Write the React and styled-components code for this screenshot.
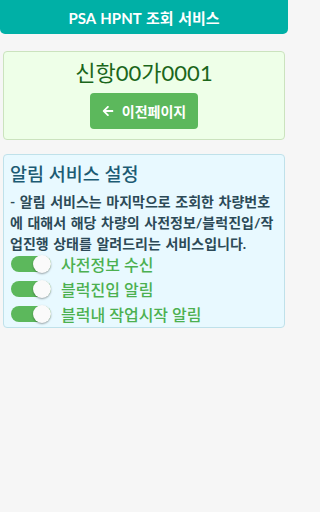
import React, { useState } from 'react';
import styled, { createGlobalStyle } from 'styled-components';
import { FaArrowLeft } from 'react-icons/fa';

const GlobalStyle = createGlobalStyle`
  html, body {
    margin: 0;
    padding: 0;
    background: #f6f6f6;
    font-family: Lato, "Noto Sans CJK KR", sans-serif;
  }
`;

const Page = styled.div`
  width: 288px;
  min-height: 512px;
`;

const Header = styled.header`
  height: 34px;
  background: #00b0a6;
  border-radius: 0 0 5px 5px;
  color: #fff;
  font-size: 15px;
  font-weight: 700;
  word-spacing: 1px;
  display: flex;
  align-items: center;
  justify-content: center;
`;

const Main = styled.main`
  padding: 17px 3px;
  display: flex;
  flex-direction: column;
  gap: 14px;
`;

const Card = styled.section`
  background: ${(p) => p.$bg};
  border: 1px solid ${(p) => p.$border};
  border-radius: 4px;
`;

const PlateCard = styled(Card)`
  padding: 6px 0 10px;
  display: flex;
  flex-direction: column;
  align-items: center;
`;

const Plate = styled.div`
  font-size: 22px;
  line-height: 30px;
  color: #1b661b;
`;

const BackButton = styled.button`
  margin-top: 5px;
  width: 108px;
  height: 36px;
  border: none;
  border-radius: 4px;
  background: #5cb85c;
  color: #fff;
  font-family: inherit;
  font-size: 14px;
  font-weight: 700;
  display: flex;
  align-items: center;
  justify-content: center;
  gap: 8px;
`;

const AlertCard = styled(Card)`
  padding: 6px 6px 0;
`;

const Title = styled.h2`
  margin: 0;
  font-size: 18.5px;
  line-height: 26px;
  font-weight: 500;
  color: #1c5b73;
`;

const Desc = styled.p`
  margin: 3.5px 0 -2px;
  font-size: 14px;
  line-height: 21px;
  font-weight: 700;
  word-spacing: 1.2px;
  color: #2c4a57;
`;

const Row = styled.label`
  height: 25px;
  display: flex;
  align-items: center;
  gap: 10px;
  padding-left: 1px;
`;

const Track = styled.span`
  position: relative;
  width: 40px;
  height: 16px;
  border-radius: 8px;
  background: ${(p) => (p.$on ? '#5cb85c' : '#ccc')};
`;

const Knob = styled.span`
  position: absolute;
  top: -1px;
  left: ${(p) => (p.$on ? '22px' : '0')};
  width: 18px;
  height: 18px;
  border-radius: 50%;
  background: #fafafa;
  box-shadow: 0 1px 2px rgba(0, 0, 0, 0.35);
`;

const Label = styled.span`
  font-size: 16px;
  font-weight: 500;
  color: #4cb050;
`;

function Toggle({ label }) {
  const [on, setOn] = useState(true);
  return (
    <Row onClick={() => setOn(!on)}>
      <Track $on={on}>
        <Knob $on={on} />
      </Track>
      <Label>{label}</Label>
    </Row>
  );
}

export default function App() {
  return (
    <Page>
      <GlobalStyle />
      <Header>PSA HPNT 조회 서비스</Header>
      <Main>
        <PlateCard $bg="#eeffe8" $border="#cbe3be">
          <Plate>신항00가0001</Plate>
          <BackButton>
            <FaArrowLeft size={12} />
            이전페이지
          </BackButton>
        </PlateCard>
        <AlertCard $bg="#e8f9ff" $border="#bfe1ea">
          <Title>알림 서비스 설정</Title>
          <Desc>
            - 알림 서비스는 마지막으로 조회한 차량번호에 대해서 해당 차량의 사전정보/블럭진입/작업진행 상태를 알려드리는 서비스입니다.
          </Desc>
          <Toggle label="사전정보 수신" />
          <Toggle label="블럭진입 알림" />
          <Toggle label="블럭내 작업시작 알림" />
        </AlertCard>
      </Main>
    </Page>
  );
}
